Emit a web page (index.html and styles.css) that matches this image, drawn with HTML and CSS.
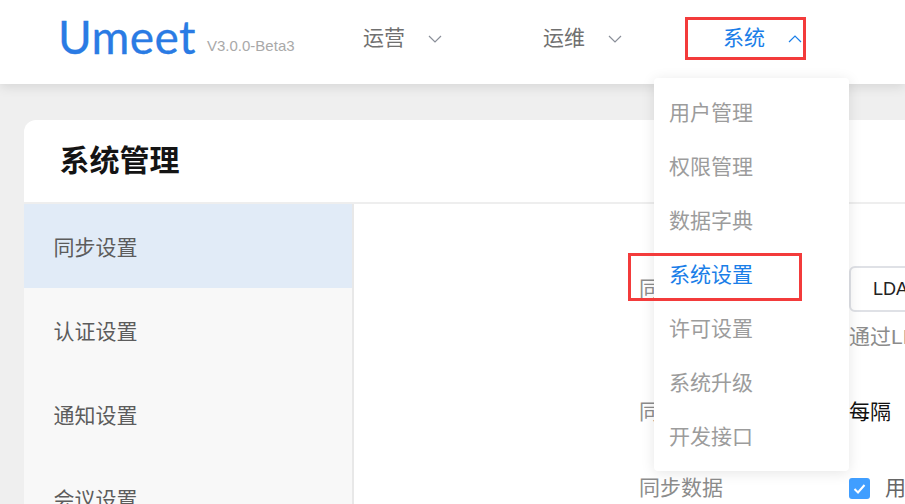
FILE: index.html
```html
<!DOCTYPE html>
<html lang="zh-CN">

<head>
    <meta charset="UTF-8">
    <title>系统管理</title>
    <link rel="stylesheet" href="styles.css">
</head>

<body>
    <header class="topbar">
        <div class="logo">Umeet</div>
        <div class="version">V3.0.0-Beta3</div>
        <nav class="mainNav">
            <div class="navItem navOne">运营
                <svg class="arrow" viewBox="0 0 14 8"><path d="M1 1l6 6 6-6" /></svg>
            </div>
            <div class="navItem navTwo">运维
                <svg class="arrow" viewBox="0 0 14 8"><path d="M1 1l6 6 6-6" /></svg>
            </div>
            <div class="navItem navThree active">系统
                <svg class="arrow" viewBox="0 0 14 8"><path d="M1 7l6-6 6 6" /></svg>
            </div>
        </nav>
    </header>

    <main class="card">
        <h1 class="cardTitle">系统管理</h1>
        <div class="cardBody">
            <aside class="sideMenu">
                <div class="sideItem current">同步设置</div>
                <div class="sideItem">认证设置</div>
                <div class="sideItem">通知设置</div>
                <div class="sideItem">会议设置</div>
            </aside>
            <section class="formArea">
                <div class="formRow rowOne">
                    <div class="label">同步方式</div>
                    <div class="field">
                        <div class="selectBox">LDAP</div>
                        <div class="hint">通过LDAP同步</div>
                    </div>
                </div>
                <div class="formRow rowTwo">
                    <div class="label">同步周期</div>
                    <div class="field plain">每隔</div>
                </div>
                <div class="formRow rowThree">
                    <div class="label">同步数据</div>
                    <div class="field check">
                        <span class="checkbox">
                            <svg viewBox="0 0 21 21"><path d="M5.5 11l3.5 3.5 6.5-7.5" /></svg>
                        </span>
                        <span class="checkText">用户</span>
                    </div>
                </div>
            </section>
        </div>
    </main>

    <ul class="dropdown">
        <li>用户管理</li>
        <li>权限管理</li>
        <li>数据字典</li>
        <li class="selected">系统设置</li>
        <li>许可设置</li>
        <li>系统升级</li>
        <li>开发接口</li>
    </ul>

    <!-- red marks on the screenshot -->
    <div class="mark markNav"></div>
    <div class="mark markMenu"></div>
</body>

</html>
```

FILE: styles.css
```css
* {
    box-sizing: border-box;
    font-family: "Liberation Sans", "Noto Sans CJK SC", sans-serif;
}

html,
body {
    height: 504px;
    overflow: hidden;
}

body {
    margin: 0;
    background-color: #efefef;
    position: relative;
}

.topbar {
    height: 84px;
    background-color: #fff;
    box-shadow: 0 2px 12px rgba(0, 0, 0, 0.12);
    display: flex;
    align-items: center;
    padding-left: 58px;
}

.logo {
    font-family: "Lato", sans-serif;
    font-size: 46px;
    line-height: 50px;
    color: #2a7be4;
    width: 149px;
    flex-shrink: 0;
    letter-spacing: 0.4px;
    -webkit-text-stroke: 0.3px #2a7be4;
    margin-top: -10px;
}

.version {
    font-size: 15px;
    color: #a9a9a9;
    width: 156px;
    flex-shrink: 0;
    margin-top: 6px;
}

.mainNav {
    display: flex;
    align-items: center;
    margin-top: -13px;
}

.navItem {
    font-size: 21px;
    color: #707070;
    display: flex;
    align-items: center;
    flex-shrink: 0;
}

.navOne {
    width: 180px;
}

.navTwo {
    width: 180px;
}

.navThree {
    width: 120px;
}

.navItem.active {
    color: #1a7ee8;
}

.arrow {
    width: 14px;
    height: 8px;
    margin-left: 23px;
    margin-top: 6px;
    fill: none;
    stroke: #8a8f99;
    stroke-width: 1.2;
}

.active .arrow {
    stroke: #1a7ee8;
}

.card {
    margin: 36px 0 0 24px;
    background-color: #fff;
    border-radius: 12px 0 0 0;
    height: 400px;
}

.cardTitle {
    margin: 0;
    height: 84px;
    padding: 0 0 0 35.5px;
    font-size: 30px;
    font-weight: 700;
    line-height: 82px;
    color: #141414;
    border-bottom: 2px solid #eeeeee;
}

.cardBody {
    display: flex;
}

.sideMenu {
    width: 330px;
    flex-shrink: 0;
    background-color: #f8f8f8;
    border-right: 2px solid #e8e8e8;
    height: 316px;
}

.sideItem {
    height: 84px;
    padding-left: 29.5px;
    font-size: 21px;
    line-height: 88px;
    color: #5c5c5c;
}

.sideItem.current {
    background-color: #e1ebf7;
}

.formArea {
    flex: 1;
    min-width: 0;
    padding-left: 285px;
}

.formRow {
    display: flex;
    font-size: 21px;
    color: #8c8c8c;
}

.label {
    width: 210px;
    flex-shrink: 0;
    white-space: nowrap;
}

.rowOne {
    padding-top: 62px;
}

.rowOne .label {
    line-height: 46px;
}

.selectBox {
    width: 120px;
    height: 46px;
    border: 2px solid #dfe1e6;
    border-radius: 6px;
    padding-left: 22px;
    font-size: 18px;
    line-height: 42px;
    color: #222;
    white-space: nowrap;
    overflow: hidden;
}

.hint {
    font-size: 21px;
    line-height: 28px;
    margin-top: 11px;
    white-space: nowrap;
}

.rowTwo {
    margin-top: 47px;
    line-height: 28px;
}

.plain {
    color: #111;
    white-space: nowrap;
}

.rowThree {
    margin-top: 48px;
    line-height: 28px;
}

.check {
    display: flex;
    align-items: center;
}

.checkbox {
    display: block;
    width: 21px;
    height: 21px;
    border-radius: 3px;
    background-color: #409eff;
    flex-shrink: 0;
}

.checkbox svg {
    display: block;
    fill: none;
    stroke: #fff;
    stroke-width: 2;
}

.checkText {
    margin-left: 15px;
    color: #666;
    white-space: nowrap;
}

.dropdown {
    position: absolute;
    left: 654px;
    top: 78px;
    width: 195px;
    height: 393px;
    margin: 0;
    padding: 8px 0 0;
    list-style: none;
    background-color: #fff;
    border-radius: 4px;
    box-shadow: 0 2px 14px rgba(0, 0, 0, 0.1);
}

.dropdown li {
    height: 54px;
    padding-left: 15px;
    font-size: 21px;
    line-height: 54px;
    color: #9c9c9c;
}

.dropdown li.selected {
    color: #1a7ee8;
}

.mark {
    position: absolute;
    border: 3px solid #f33b3b;
}

.markNav {
    left: 685px;
    top: 17px;
    width: 121px;
    height: 43px;
}

.markMenu {
    left: 628px;
    top: 253px;
    width: 174px;
    height: 48px;
}
```
